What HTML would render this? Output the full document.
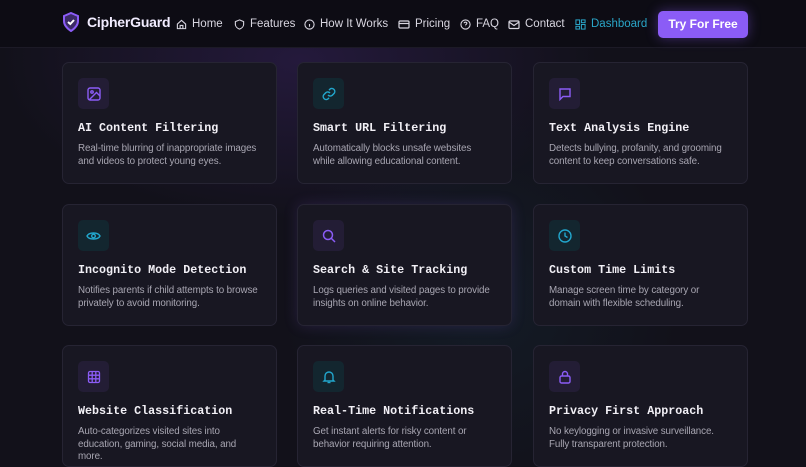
<!DOCTYPE html>
<html><head><meta charset="utf-8"><style>
*{margin:0;padding:0;box-sizing:border-box}
body{width:806px;height:460px;overflow:hidden;background:#12111a;font-family:"Liberation Sans",sans-serif;position:relative}
.bg{position:absolute;inset:0;background:radial-gradient(ellipse 300px 160px at 300px 60px,rgba(90,50,160,.25),transparent),radial-gradient(ellipse 200px 200px at 480px 300px,rgba(30,90,110,.15),transparent)}
nav{position:absolute;left:0;top:0;width:806px;height:48px;background:#0d0c14;border-bottom:1px solid #1c1a26}
.logo{position:absolute;left:62px;top:12px;display:flex;align-items:center;color:#f1ecff;font-weight:bold;font-size:14px;letter-spacing:-0.2px}
.logo svg{margin-right:7px}
.links span{position:absolute;top:18px;display:flex;align-items:center;font-size:11.5px;color:#d8d6e0;white-space:nowrap}
.links svg{margin-right:5px}
.btn{position:absolute;left:658px;top:11px;width:90px;height:27px;background:#8b5cf6;border-radius:5px;color:#fff;font-size:12px;font-weight:bold;text-align:center;line-height:27px;box-shadow:0 0 12px rgba(139,92,246,.4)}
.card{position:absolute;width:215px;height:122px;background:#181722;border:1px solid #262433;border-radius:7px}
.ic{position:absolute;left:15px;top:15px;width:31px;height:31px;border-radius:5px;display:flex;align-items:center;justify-content:center}
.p{background:#231d35;color:#8b5cf6}.c{background:#13262f;color:#22a6cc}
.t{position:absolute;left:15px;top:58px;font-family:"Liberation Mono",monospace;font-weight:bold;font-size:11.7px;color:#f2f0f6}
.d{position:absolute;left:15px;top:80px;width:182px;font-size:9.8px;line-height:12.6px;color:#a8a6b2;letter-spacing:-0.1px}
</style></head><body><div class="bg"></div>
<nav>
<div class="logo"><svg width="18" height="20" viewBox="0 0 18 20"><path d="M9 1L16 4V9C16 14 12 17 9 19C6 17 2 14 2 9V4Z" fill="#3b2a66" stroke="#8b5cf6" stroke-width="2"/><path d="M6 10L8.3 12L12 8" stroke="#fff" stroke-width="2" fill="none"/></svg>CipherGuard</div>
<div class="links">
<span style="left:176px"><svg width="11" height="11" viewBox="0 0 12 12" fill="none" stroke="#d8d6e0" stroke-width="1.2"><path d="M1.5 5.5L6 1.5L10.5 5.5V10.5H1.5Z"/><path d="M4.5 10.5V7H7.5V10.5"/></svg>Home</span>
<span style="left:234px"><svg width="11" height="11" viewBox="0 0 12 12" fill="none" stroke="#d8d6e0" stroke-width="1.2"><path d="M6 1L10.5 2.8V6C10.5 8.5 8 10.3 6 11C4 10.3 1.5 8.5 1.5 6V2.8Z"/></svg>Features</span>
<span style="left:304px"><svg width="11" height="11" viewBox="0 0 12 12" fill="none" stroke="#d8d6e0" stroke-width="1.2"><circle cx="6" cy="6" r="5"/><path d="M6 5.5V8.5M6 3.5V3.6"/></svg>How It Works</span>
<span style="left:398px"><svg width="12" height="11" viewBox="0 0 12 11" fill="none" stroke="#d8d6e0" stroke-width="1.2"><rect x="1" y="2" width="10" height="7" rx="1"/><path d="M1 4.5H11"/></svg>Pricing</span>
<span style="left:460px"><svg width="11" height="11" viewBox="0 0 12 12" fill="none" stroke="#d8d6e0" stroke-width="1.2"><circle cx="6" cy="6" r="5"/><path d="M4.5 4.7C4.5 3 7.5 3 7.5 4.7C7.5 5.8 6 5.8 6 7M6 8.6V8.7"/></svg>FAQ</span>
<span style="left:508px"><svg width="12" height="11" viewBox="0 0 12 11" fill="none" stroke="#d8d6e0" stroke-width="1.2"><rect x="1" y="2" width="10" height="7.5" rx="1"/><path d="M1 3L6 6.5L11 3"/></svg>Contact</span>
<span style="left:575px;color:#2aa6c8"><svg width="11" height="11" viewBox="0 0 12 12" fill="none" stroke="#2aa6c8" stroke-width="1.1"><rect x="1" y="1" width="4" height="5"/><rect x="7" y="1" width="4" height="3"/><rect x="1" y="8" width="4" height="3"/><rect x="7" y="6" width="4" height="5"/></svg>Dashboard</span>
</div>
<div class="btn">Try For Free</div>
</nav>

<div class="card" style="left:62px;top:62px"><div class="ic p"><svg width="14" height="14" viewBox="0 0 14 14" fill="none" stroke="currentColor" stroke-width="1.4"><rect x="1" y="1" width="12" height="12" rx="2"/><circle cx="5" cy="5" r="1.2"/><path d="M13 9L9.5 5.5L2 13"/></svg></div><div class="t">AI Content Filtering</div><div class="d">Real-time blurring of inappropriate images and videos to protect young eyes.</div></div>
<div class="card" style="left:297px;top:62px"><div class="ic c"><svg width="14" height="14" viewBox="0 0 14 14" fill="none" stroke="currentColor" stroke-width="1.4"><path d="M6 8a3 3 0 0 0 4.2.3l2-2a3 3 0 0 0-4.2-4.2l-1 1"/><path d="M8 6a3 3 0 0 0-4.2-.3l-2 2a3 3 0 0 0 4.2 4.2l1-1"/></svg></div><div class="t">Smart URL Filtering</div><div class="d">Automatically blocks unsafe websites while allowing educational content.</div></div>
<div class="card" style="left:533px;top:62px"><div class="ic p"><svg width="14" height="14" viewBox="0 0 14 14" fill="none" stroke="currentColor" stroke-width="1.4"><path d="M2 2H12V9.5H5L2 12.5Z"/></svg></div><div class="t">Text Analysis Engine</div><div class="d">Detects bullying, profanity, and grooming content to keep conversations safe.</div></div>

<div class="card" style="left:62px;top:204px"><div class="ic c"><svg width="15" height="14" viewBox="0 0 15 14" fill="none" stroke="currentColor" stroke-width="1.4"><path d="M1 7C3 3 12 3 14 7C12 11 3 11 1 7Z"/><circle cx="7.5" cy="7" r="1.8"/></svg></div><div class="t">Incognito Mode Detection</div><div class="d">Notifies parents if child attempts to browse privately to avoid monitoring.</div></div>
<div class="card" style="left:297px;top:204px;box-shadow:0 0 14px rgba(120,80,200,.2)"><div class="ic p"><svg width="14" height="14" viewBox="0 0 14 14" fill="none" stroke="currentColor" stroke-width="1.5"><circle cx="6" cy="6" r="4.5"/><path d="M9.5 9.5L13 13"/></svg></div><div class="t">Search &amp; Site Tracking</div><div class="d">Logs queries and visited pages to provide insights on online behavior.</div></div>
<div class="card" style="left:533px;top:204px"><div class="ic c"><svg width="14" height="14" viewBox="0 0 14 14" fill="none" stroke="currentColor" stroke-width="1.4"><circle cx="7" cy="7" r="6"/><path d="M7 3.5V7L9.5 8.5"/></svg></div><div class="t">Custom Time Limits</div><div class="d">Manage screen time by category or domain with flexible scheduling.</div></div>

<div class="card" style="left:62px;top:345px"><div class="ic p"><svg width="14" height="14" viewBox="0 0 14 14" fill="none" stroke="currentColor" stroke-width="1.3"><rect x="1.5" y="1.5" width="11" height="11" rx="1.5"/><path d="M1.5 5.2H12.5M1.5 8.8H12.5M5.2 1.5V12.5M8.8 1.5V12.5"/></svg></div><div class="t">Website Classification</div><div class="d">Auto-categorizes visited sites into education, gaming, social media, and more.</div></div>
<div class="card" style="left:297px;top:345px"><div class="ic c"><svg width="14" height="14" viewBox="0 0 14 14" fill="none" stroke="currentColor" stroke-width="1.4"><path d="M3 10V6a4 4 0 0 1 8 0V10L12 11H2Z"/><path d="M5.5 12.5H8.5"/></svg></div><div class="t">Real-Time Notifications</div><div class="d">Get instant alerts for risky content or behavior requiring attention.</div></div>
<div class="card" style="left:533px;top:345px"><div class="ic p"><svg width="14" height="14" viewBox="0 0 14 14" fill="none" stroke="currentColor" stroke-width="1.4"><rect x="2" y="6" width="10" height="7" rx="1.5"/><path d="M4.5 6V4a2.5 2.5 0 0 1 5 0V6"/></svg></div><div class="t">Privacy First Approach</div><div class="d">No keylogging or invasive surveillance. Fully transparent protection.</div></div>
</body></html>
